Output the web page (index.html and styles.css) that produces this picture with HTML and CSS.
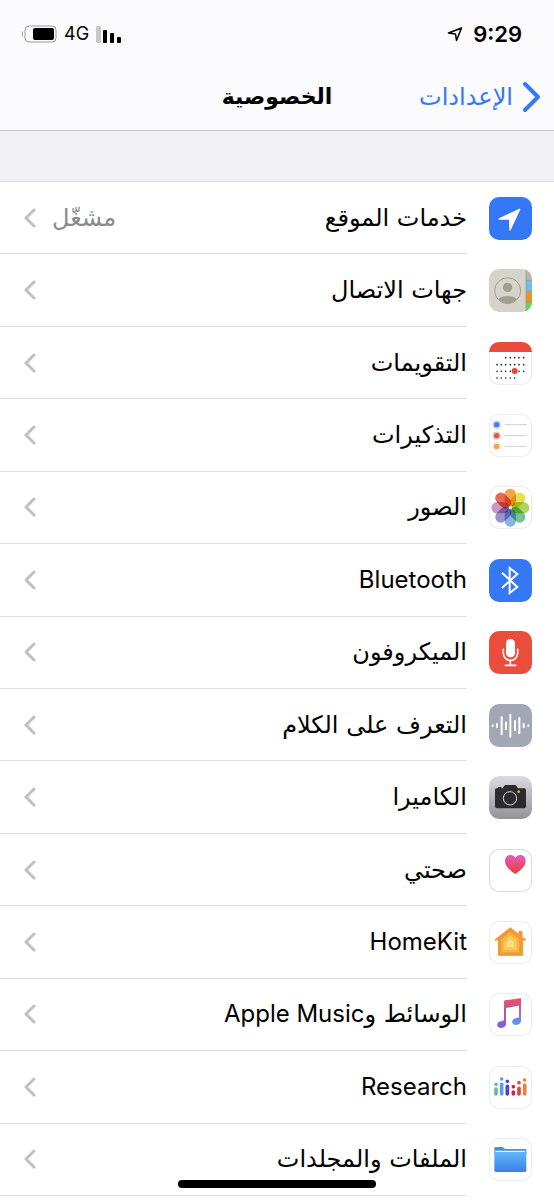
FILE: index.html
```html
<!DOCTYPE html>
<html lang="ar" dir="rtl">
<head>
  <meta charset="UTF-8">
  <meta name="viewport" content="width=device-width, initial-scale=1">
  <title>الخصوصية</title>
  <link rel="stylesheet" href="styles.css">
</head>
<body>
  <header class="topbar">
    <div class="status">
      <div class="status-group">
        <span class="clock">9:29</span>
        <svg class="locate" viewBox="0 0 32 32"><path d="M29 4 L3 14 L17 16 L19 29 Z"/></svg>
      </div>
      <div class="status-group">
        <svg class="signal" viewBox="0 0 25 17">
          <rect class="off" x="0" y="0" width="5" height="17" rx="1"/>
          <rect x="7" y="4" width="4" height="13" rx="1"/>
          <rect x="14" y="7" width="4" height="10" rx="1"/>
          <rect x="21" y="11" width="4" height="6" rx="1"/>
        </svg>
        <span class="network">4G</span>
        <svg class="battery" viewBox="0 0 36 18">
          <path class="tip" d="M2 6 a3 4 0 0 0 0 6 Z"/>
          <rect class="case" x="4" y="1" width="31" height="16" rx="4"/>
          <rect x="12" y="3" width="21" height="12" rx="2"/>
        </svg>
      </div>
    </div>
    <nav class="nav">
      <a class="back" href="#">
        <svg class="back-arrow" viewBox="0 0 20 32"><path d="M3 3 L16 16 L3 29"/></svg>
        <span>الإعدادات</span>
      </a>
      <h1>الخصوصية</h1>
    </nav>
  </header>

  <main class="content">
    <ul class="list">
      <li><a class="row" href="#">
        <svg class="icon blue" viewBox="0 0 129 129"><path fill="#fff" stroke="#fff" stroke-width="4" stroke-linejoin="round" d="M92 37 L30 66 H62 L63 99 Z"/></svg>
        <span class="cell"><span class="label">خدمات الموقع</span><span class="value">مشغّل</span><svg class="chevron" viewBox="0 0 12 20"><path d="M10 2 L2 10 L10 18"/></svg></span>
      </a></li>
      <li><a class="row" href="#">
        <svg class="icon" viewBox="0 0 129 129">
          <clipPath id="avatar"><circle cx="56" cy="65" r="38"/></clipPath>
          <rect width="129" height="129" fill="#d6d4ca"/>
          <rect x="111" width="18" height="34" fill="#b9b5a8"/>
          <rect x="111" y="34" width="18" height="33" fill="#71bdf0"/>
          <rect x="111" y="67" width="18" height="32" fill="#f0912f"/>
          <rect x="111" y="99" width="18" height="30" fill="#6dd35f"/>
          <path d="M111 0 V129 M111 34 H129 M111 67 H129 M111 99 H129" stroke="#8f9186" stroke-width="2"/>
          <circle cx="56" cy="65" r="39" fill="none" stroke="#9f9b8f" stroke-width="3"/>
          <circle cx="56" cy="55" r="14" fill="#a19d91"/>
          <ellipse cx="56" cy="100" rx="33" ry="19" fill="#a19d91" clip-path="url(#avatar)"/>
        </svg>
        <span class="cell"><span class="label">جهات الاتصال</span><svg class="chevron" viewBox="0 0 12 20"><path d="M10 2 L2 10 L10 18"/></svg></span>
      </a></li>
      <li><a class="row" href="#">
        <svg class="icon outlined" viewBox="0 0 129 129">
          <rect width="129" height="30" fill="#e94b3c"/>
          <g fill="none" stroke="#222" stroke-width="5" stroke-linecap="round">
            <path d="M50 47h0M64 47h0M77 47h0M90 47h0M104 47h0"/>
            <path d="M24 68h0M37 68h0M50 68h0M64 68h0M77 68h0M90 68h0M104 68h0"/>
            <path d="M24 88h0M37 88h0M50 88h0M64 88h0M90 88h0M104 88h0"/>
            <path d="M24 108h0M37 108h0M50 108h0M64 108h0M77 108h0"/>
          </g>
          <circle cx="77" cy="87" r="9" fill="#e8453a"/>
        </svg>
        <span class="cell"><span class="label">التقويمات</span><svg class="chevron" viewBox="0 0 12 20"><path d="M10 2 L2 10 L10 18"/></svg></span>
      </a></li>
      <li><a class="row" href="#">
        <svg class="icon outlined" viewBox="0 0 129 129">
          <path d="M47 32H113M47 65H113M47 97H113" stroke="#d0d0d3" stroke-width="3"/>
          <g fill="none" stroke-width="2">
            <circle cx="23" cy="32" r="11" stroke="#7ba4f5"/><circle cx="23" cy="32" r="8" fill="#3b7af0"/>
            <circle cx="23" cy="65" r="11" stroke="#f0897e"/><circle cx="23" cy="65" r="8" fill="#e8503f"/>
            <circle cx="23" cy="97" r="11" stroke="#f6c080"/><circle cx="23" cy="97" r="8" fill="#f2a040"/>
          </g>
        </svg>
        <span class="cell"><span class="label">التذكيرات</span><svg class="chevron" viewBox="0 0 12 20"><path d="M10 2 L2 10 L10 18"/></svg></span>
      </a></li>
      <li><a class="row" href="#">
        <svg class="icon outlined petals" viewBox="0 0 129 129">
          <rect x="47" y="8" width="34" height="53" rx="17" fill="#f39a35"/>
          <rect x="47" y="8" width="34" height="53" rx="17" fill="#e5de38" transform="rotate(45 64 65)"/>
          <rect x="47" y="8" width="34" height="53" rx="17" fill="#a9cf4c" transform="rotate(90 64 65)"/>
          <rect x="47" y="8" width="34" height="53" rx="17" fill="#69ba8b" transform="rotate(135 64 65)"/>
          <rect x="47" y="8" width="34" height="53" rx="17" fill="#7baae0" transform="rotate(180 64 65)"/>
          <rect x="47" y="8" width="34" height="53" rx="17" fill="#9488c6" transform="rotate(225 64 65)"/>
          <rect x="47" y="8" width="34" height="53" rx="17" fill="#c78bbd" transform="rotate(270 64 65)"/>
          <rect x="47" y="8" width="34" height="53" rx="17" fill="#e8574a" transform="rotate(315 64 65)"/>
          <circle cx="64" cy="65" r="4" fill="#fff"/>
        </svg>
        <span class="cell"><span class="label">الصور</span><svg class="chevron" viewBox="0 0 12 20"><path d="M10 2 L2 10 L10 18"/></svg></span>
      </a></li>
      <li><a class="row" href="#">
        <svg class="icon blue" viewBox="0 0 129 129"><path fill="none" stroke="#fff" stroke-width="6" d="M39 41 L85 84 L62 102 V27 L85 45 L39 87"/></svg>
        <span class="cell"><span class="label latin" dir="ltr">Bluetooth</span><svg class="chevron" viewBox="0 0 12 20"><path d="M10 2 L2 10 L10 18"/></svg></span>
      </a></li>
      <li><a class="row" href="#">
        <svg class="icon red" viewBox="0 0 129 129">
          <rect x="51" y="24" width="27" height="55" rx="13" fill="#fff"/>
          <path fill="none" stroke="#fff" stroke-width="5" stroke-linecap="round" d="M43 55 V67 a21 21 0 0 0 43 0 V55 M64 88 V103 M49 103 H80"/>
        </svg>
        <span class="cell"><span class="label">الميكروفون</span><svg class="chevron" viewBox="0 0 12 20"><path d="M10 2 L2 10 L10 18"/></svg></span>
      </a></li>
      <li><a class="row" href="#">
        <svg class="icon gray" viewBox="0 0 129 129"><path stroke="#fff" stroke-width="6" stroke-linecap="round" d="M11 64V66M24 60V70M38 39V91M51 55V75M64 32V98M78 51V79M91 42V88M104 60V70M118 64V66"/></svg>
        <span class="cell"><span class="label">التعرف على الكلام</span><svg class="chevron" viewBox="0 0 12 20"><path d="M10 2 L2 10 L10 18"/></svg></span>
      </a></li>
      <li><a class="row" href="#">
        <svg class="icon silver" viewBox="0 0 129 129">
          <path fill="#2b2b2e" d="M27 37 V33 H37 V37 H40 Q43 36 45 31 Q47 27 51 27 H77 Q81 27 83 31 Q85 36 88 37 H106 Q111 37 111 42 V91 Q111 97 106 97 H23 Q18 97 18 91 V42 Q18 37 23 37 Z"/>
          <circle cx="63" cy="67" r="20" fill="none" stroke="#d5d5d8" stroke-width="3"/>
          <circle cx="89" cy="47" r="4" fill="#f0a935"/>
        </svg>
        <span class="cell"><span class="label">الكاميرا</span><svg class="chevron" viewBox="0 0 12 20"><path d="M10 2 L2 10 L10 18"/></svg></span>
      </a></li>
      <li><a class="row" href="#">
        <svg class="icon outlined strong" viewBox="0 0 129 129">
          <linearGradient id="heart" x2="0" y2="1"><stop stop-color="#e45cc0"/><stop offset="1" stop-color="#eb3d30"/></linearGradient>
          <path fill="url(#heart)" d="M79 75 C68 67 48 54 48 36 C48 25 55 18 64 18 C71 18 76 21 79 27 C82 21 87 18 94 18 C103 18 110 25 110 36 C110 54 90 67 79 75 Z"/>
        </svg>
        <span class="cell"><span class="label">صحتي</span><svg class="chevron" viewBox="0 0 12 20"><path d="M10 2 L2 10 L10 18"/></svg></span>
      </a></li>
      <li><a class="row" href="#">
        <svg class="icon outlined" viewBox="0 0 129 129">
          <path fill="#f09a37" stroke="#f09a37" stroke-width="3" stroke-linejoin="round" d="M64 20 L90 41 V31 H99 V48 L111 57 H101 V103 H28 V57 H17 Z"/>
          <path fill="#f6b545" d="M64 33 L91 55 V94 H37 V55 Z"/>
          <path fill="#f8cb58" d="M64 44 L83 60 V86 H45 V60 Z"/>
          <path fill="#fbe07a" d="M64 54 L75 64 V79 H53 V64 Z"/>
        </svg>
        <span class="cell"><span class="label latin" dir="ltr">HomeKit</span><svg class="chevron" viewBox="0 0 12 20"><path d="M10 2 L2 10 L10 18"/></svg></span>
      </a></li>
      <li><a class="row" href="#">
        <svg class="icon outlined" viewBox="0 0 129 129">
          <linearGradient id="stem-a" gradientUnits="userSpaceOnUse" x1="0" y1="20" x2="0" y2="105"><stop stop-color="#e8506a"/><stop offset="1" stop-color="#7b5cf0"/></linearGradient>
          <linearGradient id="stem-b" gradientUnits="userSpaceOnUse" x1="0" y1="16" x2="0" y2="96"><stop stop-color="#e8506a"/><stop offset=".5" stop-color="#a368c8"/><stop offset="1" stop-color="#4b9ff0"/></linearGradient>
          <path fill="url(#stem-b)" d="M90 18 L96 16 V82 C96 92 89 96 81 96 C66 96 66 78 80 76 C86 75 90 76 90 70 Z"/>
          <path fill="url(#stem-a)" d="M45 26 Q45 23 48 22 L93 16 Q96 16 96 19 V37 L51 45 V91 C51 101 44 105 36 105 C21 105 21 87 35 85 C41 84 45 84 45 79 Z"/>
        </svg>
        <span class="cell"><span class="label">الوسائط و<span class="latin">Apple Music</span></span><svg class="chevron" viewBox="0 0 12 20"><path d="M10 2 L2 10 L10 18"/></svg></span>
      </a></li>
      <li><a class="row" href="#">
        <svg class="icon outlined" viewBox="0 0 129 129">
          <g stroke-width="11" stroke-linecap="round">
            <path stroke="#69b79a" d="M21 55h0M21 69V84"/>
            <path stroke="#5b9df0" d="M38 39h0M38 55V84"/>
            <path stroke="#5a3fc4" d="M55 46h0M55 61V84"/>
            <path stroke="#c22a4c" d="M73 62h0M73 78V84"/>
            <path stroke="#d9483f" d="M90 50h0M90 67V84"/>
            <path stroke="#ea8338" d="M107 42h0M107 57V84"/>
          </g>
        </svg>
        <span class="cell"><span class="label latin" dir="ltr">Research</span><svg class="chevron" viewBox="0 0 12 20"><path d="M10 2 L2 10 L10 18"/></svg></span>
      </a></li>
      <li><a class="row" href="#">
        <svg class="icon outlined" viewBox="0 0 129 129">
          <linearGradient id="folder" x2="0" y2="1"><stop stop-color="#62b8f5"/><stop offset="1" stop-color="#3a7eed"/></linearGradient>
          <path fill="#3f93d8" d="M16 31 Q16 27 20 27 H38 Q42 27 45 30 L48 33 H108 Q112 33 112 37 V50 H16 Z"/>
          <path fill="#e6f3fc" d="M19 38 H109 V48 H19 Z"/>
          <path fill="url(#folder)" d="M16 42 H112 V97 Q112 102 107 102 H21 Q16 102 16 97 Z"/>
        </svg>
        <span class="cell"><span class="label">الملفات والمجلدات</span><svg class="chevron" viewBox="0 0 12 20"><path d="M10 2 L2 10 L10 18"/></svg></span>
      </a></li>
    </ul>
  </main>
  <div class="home-indicator"></div>
</body>
</html>
```
FILE: styles.css
```css
* {
  box-sizing: border-box;
}

body {
  margin: 0;
  min-height: 100vh;
  display: flex;
  flex-direction: column;
  background: #fff;
  color: #000;
  font-family: "DejaVu Sans", sans-serif;
  font-size: 24px;
  line-height: 32px;
}

a {
  color: inherit;
  text-decoration: none;
}

svg {
  display: block;
  flex: none;
}

/* status bar + navigation */
.topbar {
  background: #fbfbfd;
  border-bottom: 1px solid #c8c8cb;
}

.status {
  display: flex;
  justify-content: space-between;
  align-items: center;
  height: 68px;
  padding: 0 32px 0 21px;
  font-family: Inter, sans-serif;
}

.status-group {
  display: flex;
  align-items: center;
  gap: 7px;
}

.clock {
  font-size: 22px;
  font-weight: 600;
  margin-left: 3px;
}

.network {
  font-size: 18px;
}

.locate {
  width: 16px;
  height: 16px;
  fill: none;
  stroke: #000;
  stroke-width: 3;
  stroke-linejoin: round;
}

.signal {
  width: 25px;
  height: 17px;
}

.signal .off {
  fill: #c8c8ca;
}

.battery {
  width: 36px;
  height: 18px;
}

.battery .case {
  fill: none;
  stroke: #9a9a9c;
  stroke-width: 1;
}

.battery .tip {
  fill: #9a9a9c;
}

.nav {
  display: grid;
  grid-template-columns: 1fr auto 1fr;
  align-items: center;
  height: 62px;
  padding: 0 12px 4px;
}

.nav h1 {
  margin: 0;
  font-size: 22px;
  font-weight: 700;
}

.back {
  display: flex;
  align-items: center;
  gap: 9px;
  color: #3478f6;
}

.back-arrow {
  width: 20px;
  height: 32px;
  fill: none;
  stroke: currentColor;
  stroke-width: 4;
  stroke-linecap: round;
  stroke-linejoin: round;
}

/* settings list */
.content {
  flex: 1;
  display: flex;
  flex-direction: column;
  padding: 51px 0 4px;
  background: linear-gradient(#f0f0f5 50px, #dcdce0 50px, #dcdce0 51px, #fff 51px);
}

.list {
  flex: 1;
  display: grid;
  grid-auto-rows: 1fr;
  margin: 0;
  padding: 0;
  list-style: none;
}

.list li {
  display: flex;
}

.row {
  flex: 1;
  display: flex;
  align-items: center;
  gap: 22px;
  padding-right: 22px;
}

.cell {
  flex: 1;
  align-self: stretch;
  display: flex;
  align-items: center;
  gap: 16px;
  padding-left: 24px;
  border-bottom: 1px solid #dcdcde;
}

.label {
  flex: 1;
  text-align: right;
}

.latin {
  font-family: Inter, sans-serif;
}

.value {
  color: #8a8a8e;
}

.chevron {
  width: 12px;
  height: 20px;
  fill: none;
  stroke: #c0c0c3;
  stroke-width: 3;
  stroke-linecap: round;
  stroke-linejoin: round;
}

.icon {
  width: 43px;
  height: 43px;
  border-radius: 10px;
}

.icon.outlined {
  box-shadow: inset 0 0 0 1px #ececee;
}

.icon.strong {
  box-shadow: inset 0 0 0 1px #dadadc;
}

.icon.blue {
  background: #3478f6;
}

.icon.red {
  background: #eb4d3d;
}

.icon.gray {
  background: #a2a7b3;
}

.icon.silver {
  background: linear-gradient(#dcdce0, #929297);
}

.petals {
  isolation: isolate;
}

.petals rect {
  mix-blend-mode: multiply;
  fill-opacity: 0.9;
}

.home-indicator {
  position: fixed;
  bottom: 12px;
  left: 50%;
  width: 198px;
  height: 8px;
  border-radius: 4px;
  background: #000;
  transform: translateX(-50%);
}
```
